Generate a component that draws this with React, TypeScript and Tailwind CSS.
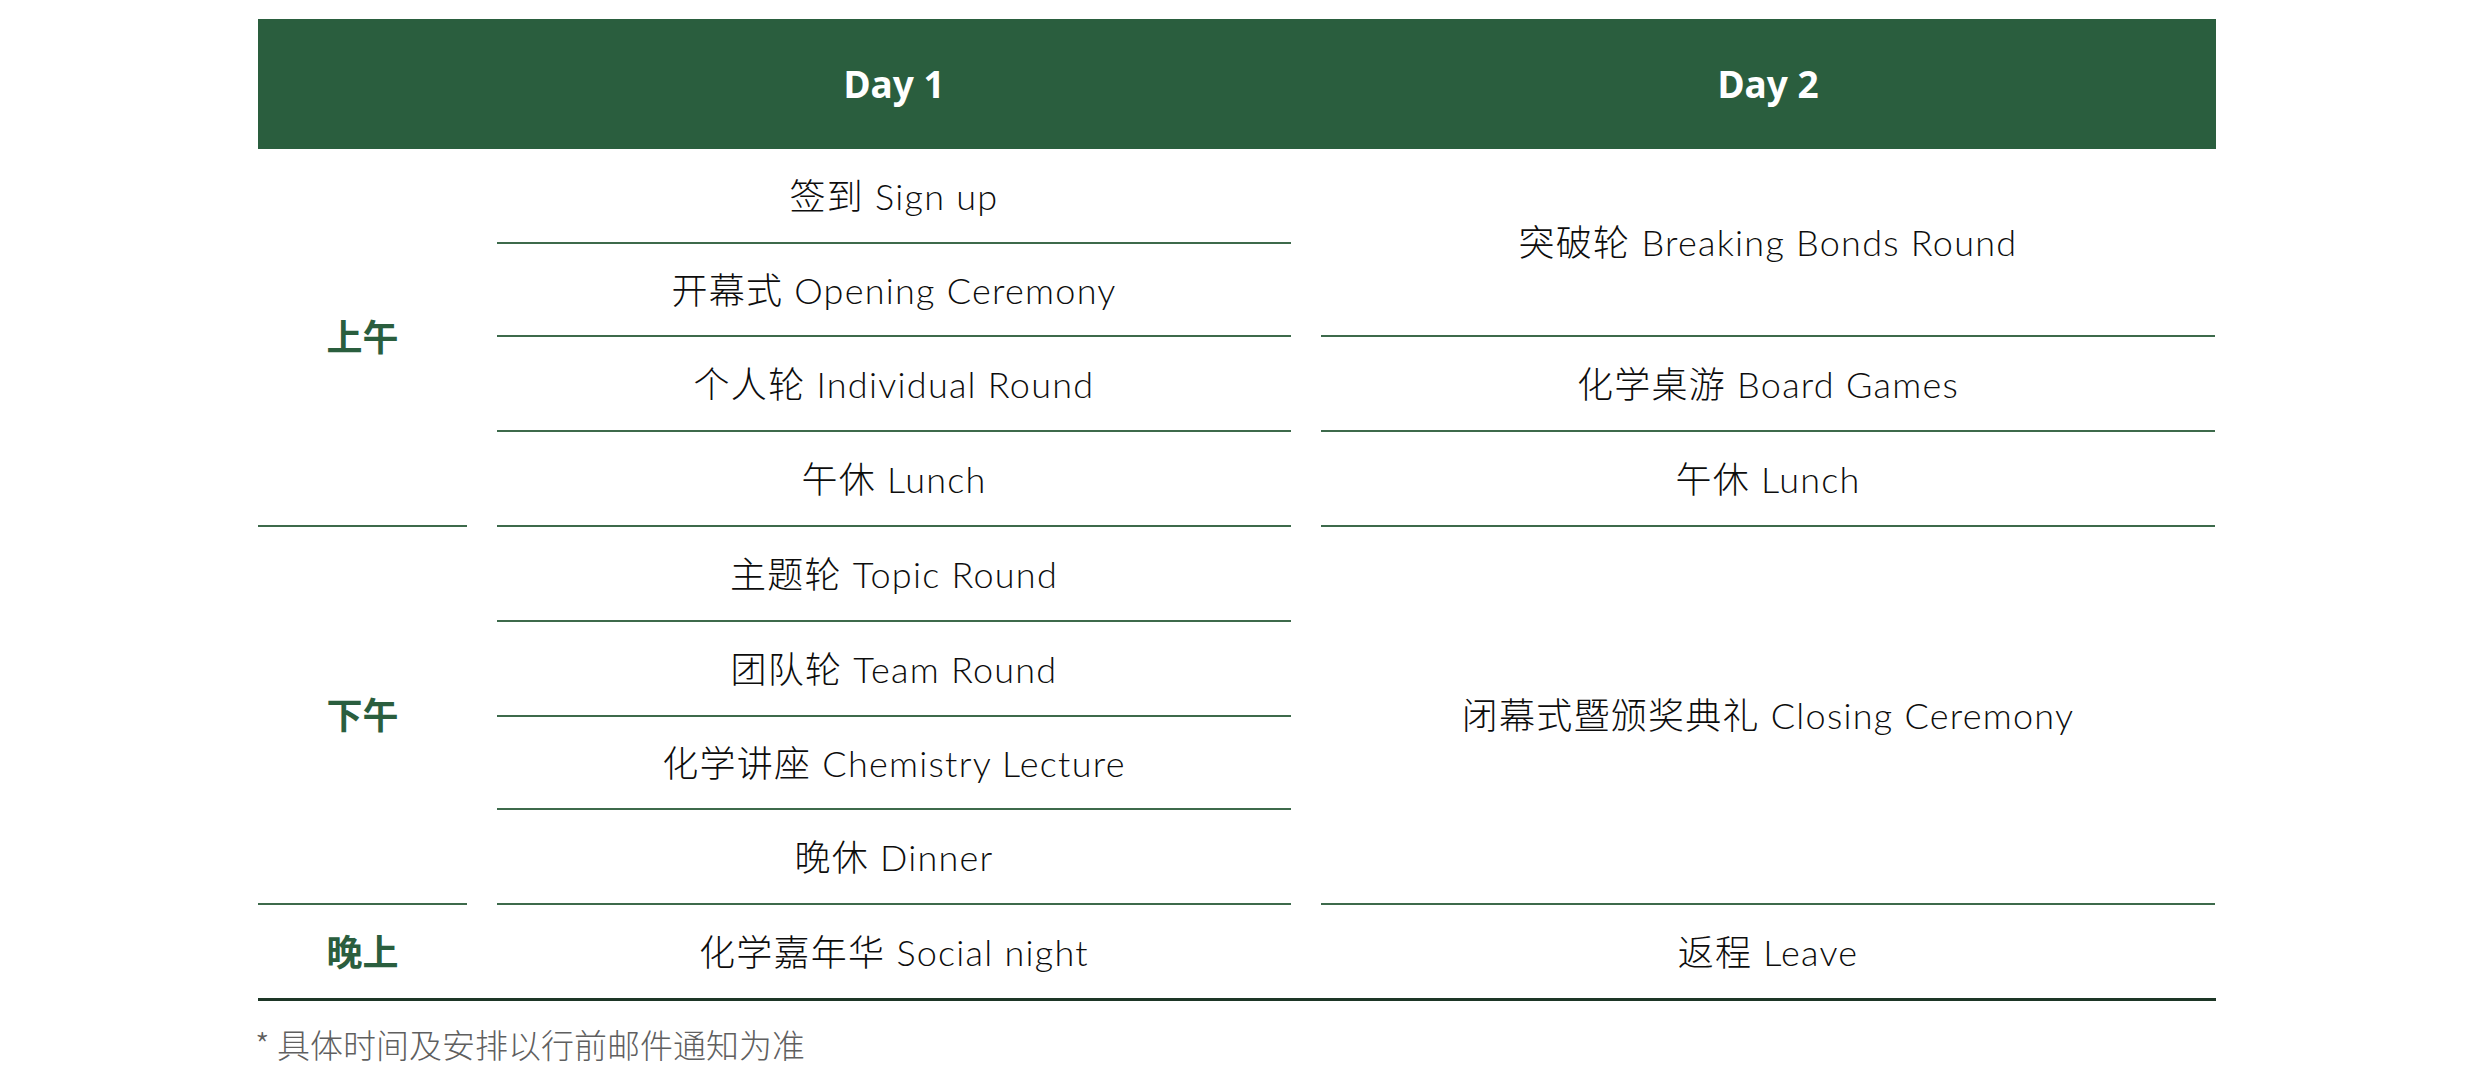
import React from "react";

const cell =
  "flex items-center justify-center border-b-2 border-[#3d6a4b] text-[36px] font-light tracking-[0.035em] text-[#0d0d0d]";
const slot = "flex items-center justify-center border-b-2 border-[#3d6a4b] text-[36px] font-bold text-[#2a5e3e]";

const day1 = [
  "签到 Sign up",
  "开幕式 Opening Ceremony",
  "个人轮 Individual Round",
  "午休 Lunch",
  "主题轮 Topic Round",
  "团队轮 Team Round",
  "化学讲座 Chemistry Lecture",
  "晚休 Dinner",
];

export default function App() {
  return (
    <div className="w-[2480px] h-[1074px] bg-white" style={{ fontFamily: '"Lato", "Noto Sans CJK SC", sans-serif' }}>
      <div className="ml-[258px] w-[1958px] pt-[19px]">
        {/* header */}
        <div className="grid grid-cols-[209px_794px_894px] gap-x-[30px] h-[130px] bg-[#2a5e3e] text-white text-[37px] font-bold font-['Noto_Sans','Noto_Sans_CJK_SC',sans-serif]">
          <div></div>
          <div className="flex items-center justify-center">Day 1</div>
          <div className="flex items-center justify-center">Day 2</div>
        </div>

        {/* body */}
        <div className="grid grid-cols-[209px_794px_894px] grid-rows-[95px_93px_95px_95px_95px_95px_93px_95px_93px] gap-x-[30px] border-b-[3px] border-[#1d3626]">
          <div className={`${slot} col-start-1 row-start-1 row-span-4`}>上午</div>
          <div className={`${slot} col-start-1 row-start-5 row-span-4`}>下午</div>
          <div className="col-start-1 row-start-9 flex items-center justify-center text-[36px] font-bold text-[#2a5e3e]">晚上</div>

          {day1.map((t, i) => (
            <div key={t} className={`${cell} col-start-2`} style={{ gridRowStart: i + 1 }}>
              {t}
            </div>
          ))}
          <div className="col-start-2 row-start-9 flex items-center justify-center text-[36px] font-light tracking-[0.035em] text-[#0d0d0d]">
            化学嘉年华 Social night
          </div>

          <div className={`${cell} col-start-3 row-start-1 row-span-2`}>突破轮 Breaking Bonds Round</div>
          <div className={`${cell} col-start-3 row-start-3`}>化学桌游 Board Games</div>
          <div className={`${cell} col-start-3 row-start-4`}>午休 Lunch</div>
          <div className={`${cell} col-start-3 row-start-5 row-span-4`}>闭幕式暨颁奖典礼 Closing Ceremony</div>
          <div className="col-start-3 row-start-9 flex items-center justify-center text-[36px] font-light tracking-[0.035em] text-[#0d0d0d]">
            返程 Leave
          </div>
        </div>

        <p className="mt-[23px] -ml-[3px] text-[33px] leading-[40px] font-light text-[#5f5f5f] font-['Noto_Sans_CJK_SC',sans-serif]">* 具体时间及安排以行前邮件通知为准</p>
      </div>
    </div>
  );
}
